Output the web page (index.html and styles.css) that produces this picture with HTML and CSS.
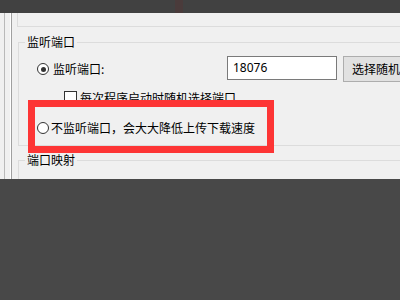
FILE: index.html
```html
<!DOCTYPE html>
<html lang="zh-CN">
<head>
<meta charset="utf-8">
<link rel="stylesheet" href="styles.css">
</head>
<body>
<div class="topbar"><span class="stripe"></span></div>
<div class="window">
  <div class="frame1">
    <div class="frame2">
      <div class="frame3">
        <div class="toppanel"></div>
        <fieldset class="group g1">
          <legend>监听端口</legend>
          <div class="row r1">
            <span class="radio on"></span>
            <span class="lbl">监听端口:</span>
            <div class="input">18076</div>
            <div class="btn">选择随机端口</div>
          </div>
          <div class="row r2">
            <span class="check"></span>
            <span class="txt">每次程序启动时随机选择端口</span>
          </div>
          <div class="row r3">
            <span class="radio"></span>
            <span class="txt">不监听端口，会大大降低上传下载速度</span>
          </div>
        </fieldset>
        <fieldset class="group g2">
          <legend>端口映射</legend>
        </fieldset>
      </div>
    </div>
  </div>
  <div class="highlight"></div>
</div>
<div class="bottom"></div>
</body>
</html>
```

FILE: styles.css
```css
html, body {
  margin: 0;
  padding: 0;
  width: 400px;
  height: 300px;
  overflow: hidden;
  background: #484848;
  font-family: "Noto Sans CJK SC", "Noto Sans", sans-serif;
  font-size: 12px;
  color: #000;
}
.topbar {
  height: 13px;
  background: #414141;
  position: relative;
}
.stripe {
  position: absolute;
  left: 175px;
  top: 0;
  width: 8px;
  height: 13px;
  background: #4a3b3b;
}
.window {
  position: relative;
  height: 166px;
  overflow: hidden;
  background: #f0f0f0;
}
.frame1 {
  margin-left: 4px;
  height: 100%;
  border-left: 1px solid #b9b9b9;
  padding-left: 5px;
}
.frame2 {
  height: 100%;
  border-left: 1px solid #ffffff;
}
.frame3 {
  height: 100%;
  border-left: 1px solid #a0a0a0;
  padding-left: 5px;
}
.toppanel {
  height: 13px;
  border-left: 1px solid #dcdcdc;
  border-bottom: 1px solid #dcdcdc;
}
.group {
  margin: 7px 0 0 1px;
  padding: 0 0 2px 18px;
  border: 1px solid #dcdcdc;
  width: 500px;
  min-width: 0;
}
.group legend {
  margin-left: -12px;
  padding: 0 2px;
  line-height: 16px;
  height: 16px;
}
.g2 {
  margin-top: 6px;
  height: 40px;
}
.row {
  display: flex;
  align-items: center;
}
.r1 {
  margin-top: 6px;
  height: 26px;
  align-items: flex-start;
}
.r1 .radio, .r1 .lbl {
  align-self: center;
}
.radio {
  width: 12px;
  height: 12px;
  box-sizing: border-box;
  border: 1px solid #333;
  border-radius: 50%;
  background: #fff;
  flex: none;
  position: relative;
}
.radio.on::after {
  content: "";
  position: absolute;
  left: 2.5px;
  top: 2.5px;
  width: 5px;
  height: 5px;
  border-radius: 50%;
  background: #333;
}
.lbl {
  margin-left: 4px;
  width: 174px;
  line-height: 16px;
}
.input {
  width: 110px;
  height: 24px;
  box-sizing: border-box;
  border: 1px solid #7a7a7a;
  background: #fff;
  padding-left: 5px;
  font-family: "Noto Sans", "DejaVu Sans", sans-serif;
  font-size: 12px;
  line-height: 22px;
}
.btn {
  margin-left: 6px;
  height: 26px;
  box-sizing: border-box;
  border: 1px solid #adadad;
  background: #e1e1e1;
  padding: 0 8px;
  line-height: 24px;
  white-space: nowrap;
}
.r2 {
  height: 31px;
}
.check {
  margin-left: 27px;
  width: 13px;
  height: 13px;
  box-sizing: border-box;
  border: 1px solid #333;
  background: #fff;
  flex: none;
}
.r2 .txt {
  margin-left: 3px;
  line-height: 16px;
}
.r3 {
  height: 30px;
}
.r3 .txt {
  margin-left: 2px;
  line-height: 16px;
}
.highlight {
  position: absolute;
  left: 28px;
  top: 87px;
  width: 246px;
  height: 53px;
  box-sizing: border-box;
  border: 7px solid #fd3535;
}
.bottom {
  height: 121px;
  background: #484848;
}
```
